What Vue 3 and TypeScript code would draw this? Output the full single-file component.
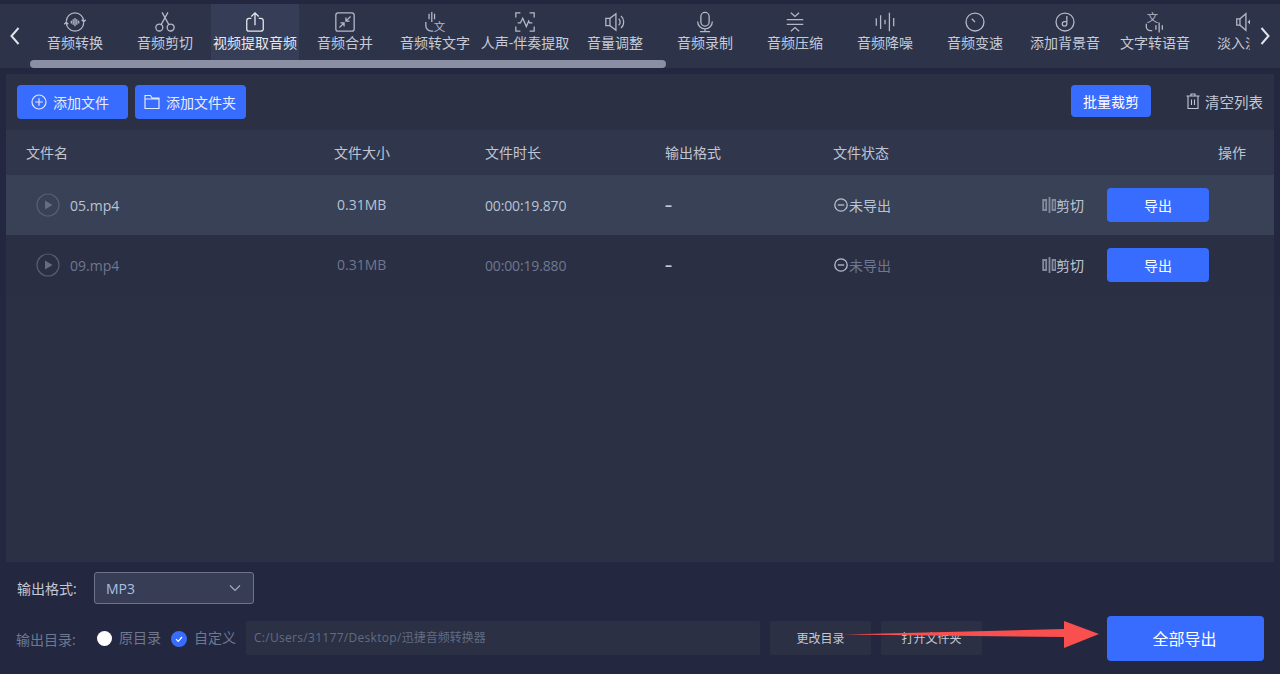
<script setup lang="ts">
interface Glyph { x: number; y: number }
interface Tab { label: string; icon: string[]; glyph?: Glyph }

const tabs: Tab[] = [
  { label: '音频转换', icon: [
    'M2.500 11.500A9.500 9.500 0 0 1 21.500 11.500M21.500 12.500A9.500 9.500 0 0 1 2.500 12.500',
    'M19.300 9.500l2.200 2.200 2.200-2.200M0.300 14.500l2.200-2.200 2.200 2.200',
    'M8 10.500v3M10 9v6M12 7.500v9M14 9v6M16 10.500v3' ] },
  { label: '音频剪切', icon: [
    'M2 18a3.800 3.800 0 1 0 7.600 0a3.800 3.800 0 1 0-7.600 0M14.400 18a3.800 3.800 0 1 0 7.600 0a3.800 3.800 0 1 0-7.600 0',
    'M7.800 14.800L15.200 1.500M16.200 14.800L8.800 1.500' ] },
  { label: '视频提取音频', icon: [
    'M8 8H5.500A2.500 2.500 0 0 0 3 10.500v9A2.500 2.500 0 0 0 5.500 22h13a2.500 2.500 0 0 0 2.500-2.500v-9A2.500 2.500 0 0 0 18.500 8H16',
    'M12 15.500V2M8 6l4-4 4 4' ] },
  { label: '音频合并', icon: [
    'M4.500 2h15A2.500 2.500 0 0 1 22 4.500v15a2.500 2.500 0 0 1-2.500 2.500h-15A2.500 2.500 0 0 1 2 19.500v-15A2.500 2.500 0 0 1 4.500 2z',
    'M18 6l-5 5M13 7v4h4M6 18l5-5M7 13h4v4' ] },
  { label: '音频转文字', glyph: { x: 10.500, y: 22 }, icon: [
    'M5.500 3v6M8.500 1v11M11.500 3v6',
    'M2 12v4a6 6 0 0 0 6 6h2' ] },
  { label: '人声-伴奏提取', icon: [
    'M2 7V2h5M17 2h5v5M22 17v5h-5M7 22H2v-5',
    'M4 13h3l2.500-5 4 9 2.500-6 1 2h3' ] },
  { label: '音量调整', icon: [
    'M2 8h4.500L13 3v18l-6.500-5H2z',
    'M6.500 8v8M16 8.500a4.500 4.500 0 0 1 0 7M18.500 5.500a8.500 8.500 0 0 1 0 13' ] },
  { label: '音频录制', icon: [
    'M12 1.500a4.500 4.500 0 0 1 4.500 4.500v6a4.500 4.500 0 0 1-9 0V6A4.500 4.500 0 0 1 12 1.500z',
    'M4 11.500a8 8 0 0 0 16 0M12 19.500v2.500M6.500 22.500h11' ] },
  { label: '音频压缩', icon: [
    'M7.500 2l4.500 4 4.500-4M3 9.500h18M3 14.500h18M7.500 22l4.500-4 4.500 4' ] },
  { label: '音频降噪', icon: [
    'M2.500 8v8M7.200 4.500v15M12 9.500v5M16.800 2v20M21.500 7.500v9' ] },
  { label: '音频变速', icon: [
    'M2.200 12a9.800 9.800 0 1 0 19.600 0a9.800 9.800 0 1 0-19.600 0',
    'M8.500 8.500l3.500 3.500' ] },
  { label: '添加背景音', icon: [
    'M2.200 12a9.800 9.800 0 1 0 19.600 0a9.800 9.800 0 1 0-19.600 0',
    'M14 5.500v8.500a2.500 2.500 0 1 1-2.500-2.500H14' ] },
  { label: '文字转语音', glyph: { x: 3, y: 12.500 }, icon: [
    'M2.500 14v3a4.500 4.500 0 0 0 4.500 4.500h2',
    'M13 15.500v5M16.500 12.500v11M20 15.500v5' ] },
  { label: '淡入淡出', icon: [
    'M3 8.500h3.500L13 3v18l-6.500-5.500H3z',
    'M6.500 8.500v7M22 12h-6M18 9.800L15.800 12l2.200 2.200' ] },
]

const rows = [
  { name: '05.mp4', duration: '00:00:19.870', active: true },
  { name: '09.mp4', duration: '00:00:19.880', active: false },
]
</script>

<template>
  <div class="app">
    <nav class="toolbar">
      <button class="nav-arrow" aria-label="上一页">
        <svg viewBox="0 0 12 20" width="12" height="20"><path d="M9.500 2L2.500 10l7 8" /></svg>
      </button>
      <div class="tabs-view">
        <div class="tabs">
          <div v-for="(tab, i) in tabs" :key="tab.label" class="tab" :class="{ current: i === 2 }">
            <svg class="tab-icon" viewBox="0 0 24 24" width="22" height="22">
              <path v-for="(d, j) in tab.icon" :key="j" :d="d" />
              <text v-if="tab.glyph" :x="tab.glyph.x" :y="tab.glyph.y" class="glyph">文</text>
            </svg>
            <span class="tab-label">{{ tab.label }}</span>
          </div>
        </div>
      </div>
      <button class="nav-arrow" aria-label="下一页">
        <svg viewBox="0 0 12 20" width="12" height="20"><path d="M2.500 2l7 8-7 8" /></svg>
      </button>
      <div class="scroll-thumb"></div>
    </nav>

    <main class="panel">
      <div class="actions">
        <button class="btn add file">
          <svg viewBox="0 0 16 16" width="16" height="16"><circle cx="8" cy="8" r="7" /><path d="M8 4.200v7.600M4.200 8h7.600" /></svg>
          <span>添加文件</span>
        </button>
        <button class="btn add folder">
          <svg viewBox="0 0 16 16" width="16" height="16"><path d="M1 14.500V1.500h5.500L8 4h7v10.500zM1 5h14" /></svg>
          <span>添加文件夹</span>
        </button>
        <span class="spacer"></span>
        <button class="btn batch">批量裁剪</button>
        <button class="clear">
          <svg viewBox="0 0 14 16" width="14" height="16"><path d="M0.500 3h13M5 3V1h4v2M2 3v12.500h10V3M5.500 6.500v5.500M8.500 6.500v5.500" /></svg>
          <span>清空列表</span>
        </button>
      </div>

      <div class="table-head">
        <span>文件名</span><span>文件大小</span><span>文件时长</span><span>输出格式</span><span>文件状态</span><span>操作</span>
      </div>

      <div v-for="row in rows" :key="row.name" class="row" :class="{ active: row.active }">
        <span class="name">
          <svg class="play" viewBox="0 0 24 24" width="24" height="24"><circle cx="12" cy="12" r="11" /><path d="M9 7.500l7.500 4.500-7.500 4.500z" /></svg>
          <span>{{ row.name }}</span>
        </span>
        <span class="size">0.31MB</span>
        <span class="duration">{{ row.duration }}</span>
        <span class="dash">–</span>
        <span class="status">
          <svg viewBox="0 0 14 14" width="14" height="14"><circle cx="7" cy="7" r="6.200" /><path d="M3.800 7h6.400" /></svg>
          <span>未导出</span>
        </span>
        <span class="ops">
          <span class="cut">
            <svg viewBox="0 0 14 18" width="14" height="18"><path d="M1.200 4h3v10h-3zM7.500 1v16M10.500 4h3v10h-3z" /></svg>
            <span>剪切</span>
          </span>
          <button class="btn export">导出</button>
        </span>
      </div>
    </main>

    <section class="format-row">
      <label>输出格式:</label>
      <div class="select">
        <span>MP3</span>
        <svg viewBox="0 0 12 8" width="12" height="8"><path d="M1 1.500l5 5 5-5" /></svg>
      </div>
    </section>

    <section class="dir-row">
      <label>输出目录:</label>
      <span class="radio off"></span>
      <span class="radio-text first">原目录</span>
      <span class="radio on">
        <svg viewBox="0 0 10 10" width="10" height="10"><path d="M2 5.200l2.200 2.200L8 3" /></svg>
      </span>
      <span class="radio-text">自定义</span>
      <div class="path"><span class="latin">C:/Users/31177/Desktop/</span>迅捷音频转换器</div>
      <button class="ghost">更改目录</button>
      <button class="ghost">打开文件夹</button>
      <button class="btn export-all">全部导出</button>
    </section>

    <svg class="annotation" viewBox="0 0 260 30" width="260" height="30">
      <path d="M0 14.500L221 9V1L256 14 221 28V17z" />
    </svg>
  </div>
</template>

<style>
html, body { margin: 0; background: #232840; }
</style>

<style scoped>
.app {
  position: relative;
  width: 1280px;
  height: 674px;
  overflow: hidden;
  background: #232840;
  font-family: "Open Sans", "Noto Sans CJK SC", sans-serif;
  font-size: 14px;
  color: #c3c9d8;
  padding-top: 4px;
  box-sizing: border-box;
}
button { font: inherit; border: 0; padding: 0; cursor: pointer; }

.toolbar {
  position: relative;
  display: flex;
  height: 64px;
  background: #2d3449;
}
.nav-arrow {
  flex: none;
  width: 30px;
  height: 64px;
  background: none;
  display: flex;
  align-items: center;
  justify-content: center;
}
.nav-arrow svg path { fill: none; stroke: #dfe2ea; stroke-width: 2; }
.tabs-view { flex: none; width: 1220px; overflow: hidden; }
.tabs { display: flex; width: 1260px; }
.tab {
  flex: none;
  width: 90px;
  height: 56px;
  display: flex;
  flex-direction: column;
  align-items: center;
  padding-top: 7px;
  box-sizing: border-box;
}
.tab.current { background: #363e57; width: 88px; margin: 0 1px; }
.tab-icon { flex: none; overflow: visible; }
.tab-icon path { fill: none; stroke: #b4b9c9; stroke-width: 1.400; }
.tab.current .tab-icon path { stroke: #e6e8ee; }
.glyph { font-size: 12.500px; fill: #b4b9c9; }
.tab-label {
  line-height: 20px;
  white-space: nowrap;
  color: #c6cbd9;
}
.tab.current .tab-label { color: #e6e9f0; }
.scroll-thumb {
  position: absolute;
  left: 30px;
  top: 56px;
  width: 636px;
  height: 8px;
  border-radius: 4px;
  background: #8a8fa3;
}

.panel {
  margin: 6px 6px 0;
  height: 488px;
  background: #2b3044;
}
.actions {
  display: flex;
  align-items: flex-start;
  padding: 11px 11px 0;
  height: 34px;
}
.spacer { flex: 1; }
.btn {
  background: #386cff;
  color: #fff;
  border-radius: 4px;
  display: inline-flex;
  align-items: center;
  justify-content: center;
}
.add {
  width: 111px;
  height: 34px;
  justify-content: flex-start;
  gap: 6px;
  margin-right: 7px;
  padding-bottom: 1px;
  color: #e8ecf7;
}
.add.file { padding-left: 14px; }
.add.folder { padding-left: 9px; }
.add svg { fill: none; stroke: #e3e8f6; stroke-width: 1.200; }
.batch { width: 80px; height: 32px; }
.clear {
  margin-left: 35px;
  height: 32px;
  background: none;
  color: #c3c8d6;
  display: inline-flex;
  align-items: center;
  gap: 5px;
  font-size: 14.500px;
}
.clear svg { fill: none; stroke: #c3c8d6; stroke-width: 1.100; }

.table-head {
  display: grid;
  grid-template-columns: 308px 151px 180px 168px 1fr 56px;
  margin-top: 11px;
  height: 45px;
  box-sizing: border-box;
  padding: 0 0 2px 20px;
  align-items: center;
  background: #30364b;
  color: #c0c5d3;
}
.row {
  display: grid;
  grid-template-columns: 298px 151px 180px 168px 168px 1fr;
  height: 60px;
  align-items: center;
  padding-left: 30px;
  color: #6e7890;
  background: #2a2f43;
}
.row.active { background: #384155; color: #b9c3d6; }
.name { display: flex; align-items: center; gap: 10px; }
.play circle { fill: none; stroke: #565e74; stroke-width: 1.200; }
.play path { fill: #636d86; }
.size { padding: 0 0 2px 3px; }
.duration { letter-spacing: -0.150px; }
.dash { font-weight: 700; padding-bottom: 2px; color: #c3c8d6; }
.status { display: flex; align-items: center; gap: 1px; padding-left: 1px; }
.status svg { fill: none; stroke: #b9bfce; stroke-width: 1.300; }
.ops { display: flex; align-items: center; }
.cut {
  display: inline-flex;
  align-items: center;
  margin-left: 41px;
  color: #bfc4d2;
}
.cut svg { fill: none; stroke: #858b9f; stroke-width: 1.800; }
.export { width: 102px; height: 34px; margin-left: 23px; }

.format-row {
  display: flex;
  align-items: center;
  height: 32px;
  margin-top: 10px;
  padding-left: 17px;
}
.format-row label { width: 77px; color: #c3c8d6; }
.select {
  width: 160px;
  height: 32px;
  box-sizing: border-box;
  border: 1px solid #6f7488;
  border-radius: 3px;
  background: #363d54;
  display: flex;
  align-items: center;
  justify-content: space-between;
  padding: 0 12px 0 11px;
  color: #a9c0e8;
}
.select svg { fill: none; stroke: #a5aabb; stroke-width: 1.200; }

.dir-row {
  display: flex;
  align-items: center;
  height: 45px;
  margin-top: 12px;
  padding-left: 16px;
}
.dir-row label { width: 81px; color: #6e7890; }
.radio { flex: none; width: 15px; height: 15px; border-radius: 50%; display: inline-flex; align-items: center; justify-content: center; }
.radio.off { background: #fff; }
.radio.on { background: #386cff; width: 16px; height: 16px; }
.radio.on svg { fill: none; stroke: #fff; stroke-width: 1.200; }
.radio-text {
  color: #6e7890;
  margin: 0 0 3px 7px;
  width: 42px;
  white-space: nowrap;
}
.radio-text.first { margin-right: 10px; }
.path {
  flex: none;
  width: 514px;
  height: 34px;
  margin: 0 0 1px 10px;
  box-sizing: border-box;
  padding-left: 8px;
  line-height: 33px;
  font-size: 12px;
  background: #2b3044;
  color: #626c83;
  border-radius: 2px;
}
.latin { letter-spacing: 0.300px; }
.ghost {
  flex: none;
  width: 101px;
  height: 34px;
  margin: 0 0 1px 10px;
  padding-bottom: 1px;
  background: #2b3044;
  color: #c3c8d6;
  font-size: 12px;
  border-radius: 2px;
}
.export-all {
  flex: none;
  width: 157px;
  height: 45px;
  margin-left: 125px;
  padding: 0 2px 2px 0;
  font-size: 16px;
}
.annotation {
  position: absolute;
  left: 843px;
  top: 620px;
}
.annotation path { fill: #f9504f; }
</style>
